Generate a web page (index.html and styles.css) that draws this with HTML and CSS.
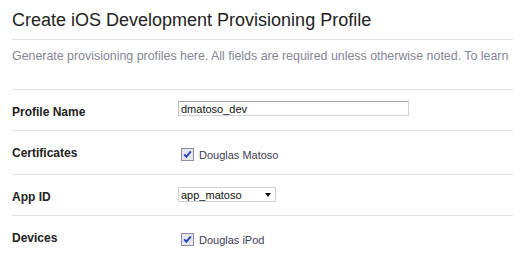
FILE: index.html
```html
<!DOCTYPE html>
<html lang="en">
<head>
    <meta charset="UTF-8">
    <meta name="viewport" content="width=device-width, initial-scale=1.0">
    <title>Create iOS Development Provisioning Profile</title>
    <link rel="stylesheet" href="styles.css">
</head>
<body>
    <div class="page">
        <h1 class="title">Create iOS Development Provisioning Profile</h1>
        <p class="intro">Generate provisioning profiles here. All fields are required unless otherwise noted. To learn</p>

        <div class="form">
            <div class="row">
                <label class="label" for="profile-name">Profile Name</label>
                <div class="field">
                    <input class="text-input" id="profile-name" type="text" value="dmatoso_dev">
                </div>
            </div>
            <div class="row">
                <span class="label">Certificates</span>
                <div class="field">
                    <label class="check">
                        <span class="box">
                            <svg width="13" height="13" viewBox="0 0 13 13">
                                <rect x="0.5" y="0.5" width="12" height="12" fill="#e6e6ec" stroke="#8c8ca4"/>
                                <path d="M3.2 6.4 L5.4 8.8 L9.8 3.4" fill="none" stroke="#2b44c4" stroke-width="2"/>
                            </svg>
                        </span>
                        Douglas Matoso
                    </label>
                </div>
            </div>
            <div class="row">
                <label class="label" for="app-id">App ID</label>
                <div class="field">
                    <div class="select">
                        <select id="app-id">
                            <option>app_matoso</option>
                        </select>
                    </div>
                </div>
            </div>
            <div class="row">
                <span class="label">Devices</span>
                <div class="field">
                    <label class="check">
                        <span class="box">
                            <svg width="13" height="13" viewBox="0 0 13 13">
                                <rect x="0.5" y="0.5" width="12" height="12" fill="#e6e6ec" stroke="#8c8ca4"/>
                                <path d="M3.2 6.4 L5.4 8.8 L9.8 3.4" fill="none" stroke="#2b44c4" stroke-width="2"/>
                            </svg>
                        </span>
                        Douglas iPod
                    </label>
                </div>
            </div>
        </div>
    </div>
</body>
</html>
```

FILE: styles.css
```css
* {
    box-sizing: border-box;
    font-family: "Liberation Sans", Arial, Helvetica, sans-serif;
}
body {
    margin: 0;
    padding: 0;
    background-color: #fff;
    overflow: hidden;
}
.page {
    padding-left: 12px;
}
.title {
    margin: 0;
    padding: 9px 0 8px 0;
    font-size: 18px;
    line-height: 22px;
    font-weight: normal;
    color: #222;
    border-bottom: 1px solid #e2e2ea;
}
.intro {
    margin: 0;
    padding: 9px 0 25px 0;
    font-size: 12.4px;
    line-height: 15px;
    color: #858596;
    white-space: nowrap;
    overflow: hidden;
    border-bottom: 1px solid #e2e2ea;
}
.row {
    display: flex;
    align-items: flex-start;
    padding: 14px 0 10px 0;
    border-bottom: 1px solid #e2e2ea;
}
.row:last-child {
    border-bottom: none;
}
.label {
    width: 166px;
    font-size: 12px;
    line-height: 16px;
    font-weight: bold;
    color: #222;
}
.text-input {
    display: block;
    width: 231px;
    height: 15px;
    margin-top: -3px;
    padding: 0 2px;
    font-size: 11px;
    color: #111;
    border: 1px solid #d0d2dc;
    border-top-color: #a4a6b4;
    border-left-color: #b8bac6;
    outline: none;
}
.check {
    display: flex;
    align-items: center;
    height: 19px;
    font-size: 11px;
    color: #3c3c54;
}
.box {
    display: block;
    width: 13px;
    height: 13px;
    margin: 0 5px 0 3px;
}
.box svg {
    display: block;
}
.select {
    position: relative;
    width: 98px;
    margin-top: -2px;
}
.select select {
    display: block;
    width: 98px;
    height: 15px;
    padding: 0 2px;
    font-size: 11px;
    color: #111;
    background-color: #fff;
    border: 1px solid #cfd1da;
    border-radius: 0;
    appearance: none;
    -webkit-appearance: none;
    outline: none;
}
.select::after {
    content: "";
    position: absolute;
    right: 5px;
    top: 6px;
    border-left: 3.5px solid transparent;
    border-right: 3.5px solid transparent;
    border-top: 4px solid #111;
}
```
